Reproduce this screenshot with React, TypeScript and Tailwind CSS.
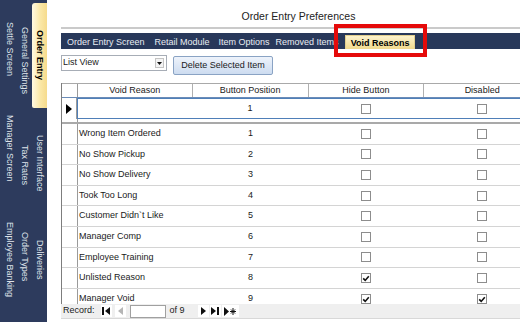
import React from 'react';

const reasons: [string, number, boolean, boolean][] = [
  ['Wrong Item Ordered', 1, false, false],
  ['No Show Pickup', 2, false, false],
  ['No Show Delivery', 3, false, false],
  ['Took Too Long', 4, false, false],
  ["Customer Didn`t Like", 5, false, false],
  ['Manager Comp', 6, false, false],
  ['Employee Training', 7, false, false],
  ['Unlisted Reason', 8, true, false],
  ['Manager Void', 9, true, true],
];

function Check({ on }: { on?: boolean }) {
  return (
    <span className="w-[10px] h-[10px] border border-[#8d8d8d] bg-white flex items-center justify-center">
      {on && (
        <svg width="8" height="8" viewBox="0 0 8 8">
          <path d="M1.2 4.4 L3.2 6.4 L6.8 2.2" stroke="#111" strokeWidth="1.6" fill="none" />
        </svg>
      )}
    </span>
  );
}

function Vert({ children, className = '' }: { children: React.ReactNode; className?: string }) {
  return <span className={'[writing-mode:vertical-rl] leading-[15px] whitespace-nowrap ' + className}>{children}</span>;
}

function NavBtn({ children }: { children: React.ReactNode }) {
  return <span className="w-[11px] h-[12px] flex items-center justify-center bg-white">{children}</span>;
}

export default function App() {
  return (
    <div className="w-[520px] h-[322px] flex overflow-hidden bg-white text-[9px] text-[#1a1a1a] font-['Liberation_Sans',Arial,sans-serif]">
      {/* left category strip */}
      <aside className="w-[47px] shrink-0 bg-[#2d3b5d] flex pl-[2px] text-[#dfe3ea]">
        <div className="w-[15px] flex flex-col items-center">
          <div className="h-[115px] pt-[22px]"><Vert>Settle Screen</Vert></div>
          <div className="h-[107px]"><Vert>Manager Screen</Vert></div>
          <div><Vert>Employee Banking</Vert></div>
        </div>
        <div className="w-[15px] flex flex-col items-center">
          <div className="h-[145px] pt-[27px]"><Vert>General Settings</Vert></div>
          <div className="h-[87px]"><Vert>Tax Rates</Vert></div>
          <div><Vert>Order Types</Vert></div>
        </div>
        <div className="w-[15px] flex flex-col items-center">
          <div className="mt-[3px] h-[105px] w-[15px] pt-[27px] flex justify-center rounded-tl-[3px] rounded-bl-[2px] bg-gradient-to-r from-[#fff9e2] via-[#fbe9aa] to-[#f6db8c] text-black font-bold">
            <Vert>Order Entry</Vert>
          </div>
          <div className="h-[132px] pt-[27px]"><Vert>User Interface</Vert></div>
          <div><Vert>Deliveries</Vert></div>
        </div>
      </aside>

      <main className="flex-1 relative flex flex-col overflow-hidden">
        <div className="h-[27px] pl-[30px] pt-[10px] text-center text-[10.5px] leading-[13px] text-[#222]">
          Order Entry Preferences
        </div>
        <div className="ml-[14px] h-[2px] bg-[#cacaca]" />

        <nav className="ml-[14px] mt-[4px] h-[16px] bg-[#28385a] flex items-end pl-[6px] text-[#e9edf3] whitespace-nowrap">
          <span className="h-[14px] leading-[14px]">Order Entry Screen</span>
          <span className="h-[14px] leading-[14px] ml-[10px]">Retail Module</span>
          <span className="h-[14px] leading-[14px] ml-[9px]">Item Options</span>
          <span className="h-[14px] leading-[14px] ml-[6px]">Removed Items</span>
          <span className="h-[14px] leading-[14px] ml-[6px] px-[5px] bg-gradient-to-b from-[#fdf3cd] to-[#f1d98c] border border-b-0 border-[#e3cf8e] text-black font-bold">
            Void Reasons
          </span>
        </nav>

        {/* highlight box */}
        <div className="absolute left-[287px] top-[24px] w-[93px] h-[33px] border-[4px] border-[#e50a0a]" />

        <div className="ml-[14px] mt-[6px] h-[20px] flex items-start">
          <div className="w-[106px] h-[16px] border border-[#a7adb6] bg-white flex items-center pl-[1px]">
            <span className="flex-1">List View</span>
            <span className="w-[9px] h-[10px] mr-[2px] border border-[#c4c4c4] bg-[#f4f4f4] flex items-center justify-center">
              <svg width="5" height="3" viewBox="0 0 5 3"><path d="M0 0 H5 L2.5 3 Z" fill="#111" /></svg>
            </span>
          </div>
          <button className="ml-[6px] mt-[1px] w-[100px] h-[19px] rounded-[2px] border border-[#8aa3c4] bg-gradient-to-b from-[#eef3fb] to-[#cddcf0] text-[9px] text-[#1a1a1a]">
            Delete Selected Item
          </button>
        </div>

        {/* datasheet */}
        <div className="ml-[14px] mt-[8px] w-[479px] h-[221px] overflow-hidden border-l border-[#7d7d7d] flex flex-col">
          <div className="flex h-[15px] shrink-0 border-t border-b border-t-[#a9a9a9] border-b-[#6b8cb8] bg-white">
            <div className="w-[16px] border-r border-[#9a9a9a]" />
            <div className="w-[115px] border-r border-[#b0b0b0] text-center leading-[13px]">Void Reason</div>
            <div className="w-[116px] border-r border-[#b0b0b0] text-center leading-[13px]">Button Position</div>
            <div className="w-[116px] border-r border-[#b0b0b0] text-center leading-[13px]">Hide Button</div>
            <div className="w-[116px] text-center leading-[13px]">Disabled</div>
          </div>

          <div className="flex h-[21px] shrink-0">
            <div className="w-[16px] border-r border-[#9a9a9a] flex items-center justify-center">
              <svg width="6" height="10" viewBox="0 0 6 10"><path d="M0 0 L6 5 L0 10 Z" fill="#000" /></svg>
            </div>
            <div className="flex flex-1 border-y border-l border-[#4f7fb8]">
              <div className="w-[114px]" />
              <div className="w-[116px] flex items-center justify-center">1</div>
              <div className="w-[116px] flex items-center justify-center"><Check /></div>
              <div className="w-[116px] flex items-center justify-center"><Check /></div>
            </div>
          </div>

          <div className="flex h-[3px] shrink-0">
            <div className="w-[16px] border-r border-[#9a9a9a]" />
          </div>
          <div className="h-[2px] shrink-0 bg-[#a9a9a9]" />

          {reasons.map(([name, pos, hide, dis]) => (
            <div key={name} className="flex h-[20.6px] shrink-0 border-b border-[#d4d4d4]">
              <div className="w-[16px] border-r border-[#9a9a9a]" />
              <div className="w-[115px] pl-[1px] flex items-center whitespace-nowrap">{name}</div>
              <div className="w-[116px] flex items-center justify-center">{pos}</div>
              <div className="w-[116px] flex items-center justify-center"><Check on={hide} /></div>
              <div className="w-[116px] flex items-center justify-center"><Check on={dis} /></div>
            </div>
          ))}
        </div>

        <div className="ml-[14px] h-[15px] bg-[#efefef] border-b border-[#d8d8d8] flex items-center pl-[2px]">
          <span>Record:</span>
          <span className="ml-[6px] flex gap-[3px]">
            <NavBtn>
              <svg width="8" height="8" viewBox="0 0 8 8"><path d="M0 0 H2 V8 H0 Z M8 0 L3 4 L8 8 Z" fill="#111" /></svg>
            </NavBtn>
            <NavBtn>
              <svg width="5" height="8" viewBox="0 0 5 8"><path d="M5 0 L0 4 L5 8 Z" fill="#b5b5b5" /></svg>
            </NavBtn>
          </span>
          <span className="ml-[4px] w-[36px] h-[13px] bg-white border border-[#a0a0a0]" />
          <span className="ml-[4px]">of 9</span>
          <span className="ml-[13px] flex gap-[1px]">
            <NavBtn>
              <svg width="5" height="8" viewBox="0 0 5 8"><path d="M0 0 L5 4 L0 8 Z" fill="#111" /></svg>
            </NavBtn>
            <NavBtn>
              <svg width="8" height="8" viewBox="0 0 8 8"><path d="M0 0 L5 4 L0 8 Z M6 0 H8 V8 H6 Z" fill="#111" /></svg>
            </NavBtn>
            <span className="w-[17px] h-[12px] flex items-center justify-center bg-white">
              <svg width="13" height="9" viewBox="0 0 13 9">
                <path d="M0 0 L5 4.5 L0 9 Z" fill="#111" />
                <path d="M9 1 V8 M6 4.5 H12 M7 2.5 L11 6.5 M11 2.5 L7 6.5" stroke="#111" strokeWidth="1" />
              </svg>
            </span>
          </span>
        </div>
      </main>
    </div>
  );
}
